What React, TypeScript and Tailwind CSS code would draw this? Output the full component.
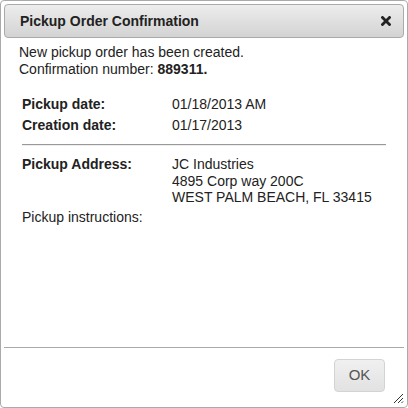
import React from 'react';

const rows = [
  { label: 'Pickup date:', value: '01/18/2013 AM' },
  { label: 'Creation date:', value: '01/17/2013' },
];

export default function App() {
  return (
    <div className="w-[408px] h-[408px] bg-white font-['Liberation_Sans',Arial,sans-serif] text-[14px] text-[#222]">
      <div className="w-full h-full flex flex-col border border-[#aaa] rounded-[4px] p-[3px]">
        {/* title bar */}
        <div className="h-[34px] flex items-center justify-between px-[15px] border border-[#aaa] rounded-[4px] bg-gradient-to-b from-[#ededed] to-[#d3d3d3]">
          <span className="font-bold text-[14px] text-[#222]">Pickup Order Confirmation</span>
          <svg width="10" height="10" viewBox="0 0 10 10" className="mr-[-3px]">
            <path d="M1.5 1.5 L8.5 8.5 M8.5 1.5 L1.5 8.5" stroke="#222" strokeWidth="2.8" strokeLinecap="square" />
          </svg>
        </div>

        {/* content */}
        <div className="flex-1 px-[15px] pt-[6px] leading-[17px]">
          <div>New pickup order has been created.</div>
          <div>
            Confirmation number: <span className="font-bold">889311.</span>
          </div>

          <div className="mt-[16px] pl-[3px] pr-[3px]">
            {rows.map((r) => (
              <div key={r.label} className="flex h-[21px] items-center">
                <span className="w-[150px] font-bold">{r.label}</span>
                <span>{r.value}</span>
              </div>
            ))}
            <div className="mt-[8px] border-t border-[#999] border-b border-b-[#eee] h-[2px]" />
            <div className="flex mt-[10px] leading-[16.5px]">
              <span className="w-[150px] font-bold">Pickup Address:</span>
              <div>
                <div>JC Industries</div>
                <div>4895 Corp way 200C</div>
                <div>WEST PALM BEACH, FL 33415</div>
              </div>
            </div>
            <div className="mt-[3px]">Pickup instructions:</div>
          </div>
        </div>

        {/* footer */}
        <div className="relative h-[57px] border-t border-[#aaa] flex items-start justify-end pt-[11px] pr-[19px]">
          <button className="w-[51px] h-[33px] rounded-[4px] border border-[#d3d3d3] bg-gradient-to-b from-[#f0f0f0] to-[#e2e2e2] text-[#555] text-[15px]">
            OK
          </button>
          <svg width="12" height="12" viewBox="0 0 12 12" className="absolute right-0 bottom-0">
            <path d="M11 2 L2 11 M11 6 L6 11 M11 9.5 L9.5 11" stroke="#333" strokeWidth="1" />
          </svg>
        </div>
      </div>
    </div>
  );
}
